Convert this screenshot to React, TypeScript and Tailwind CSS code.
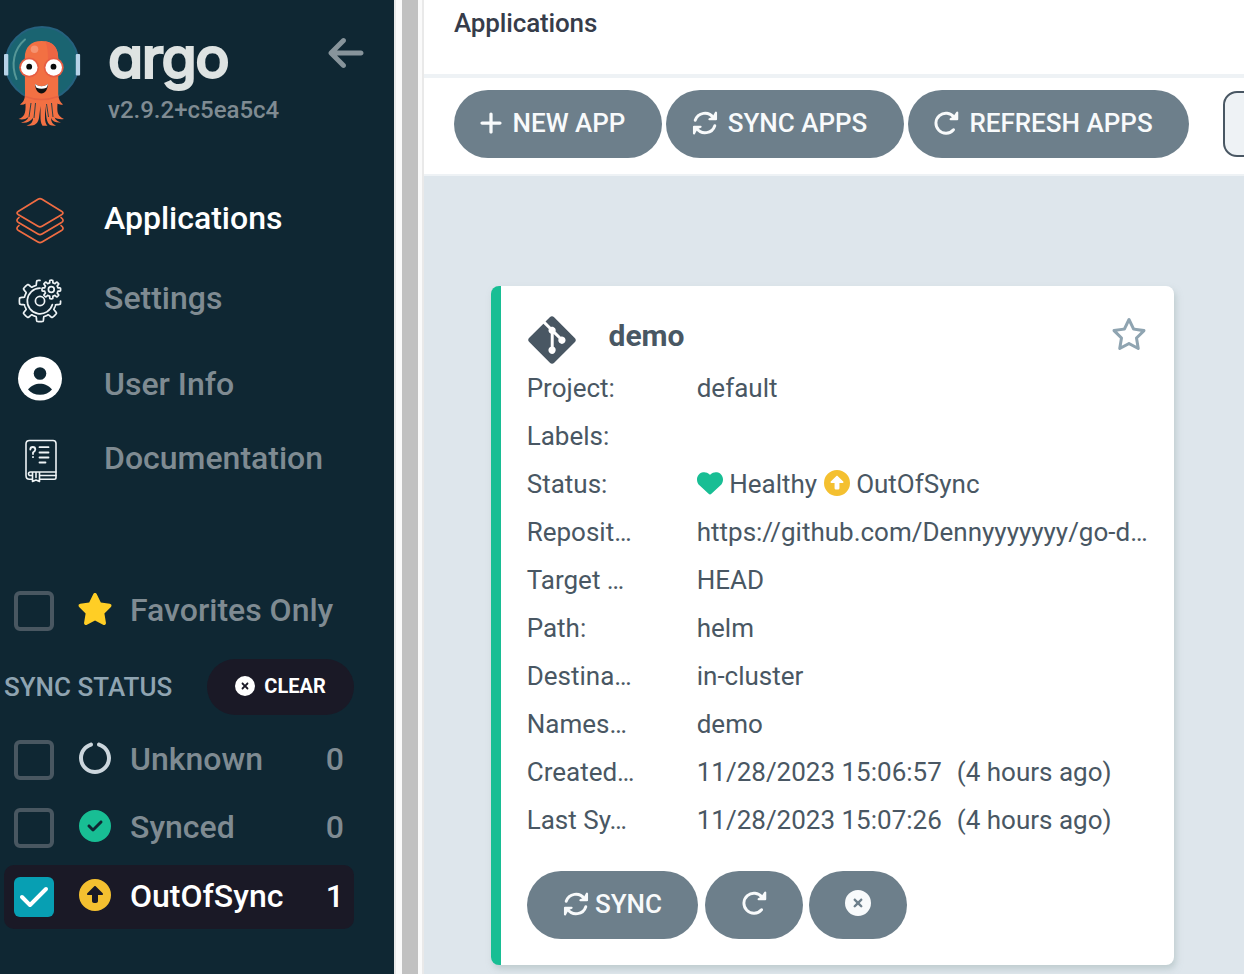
import React from "react";
import {
  FaArrowLeft,
  FaCheck,
  FaCircleCheck,
  FaCircleNotch,
  FaCircleUp,
  FaCircleXmark,
  FaGitAlt,
  FaHeart,
  FaPlus,
  FaRegStar,
  FaStar,
} from "react-icons/fa6";

function gearPath(cx: number, cy: number, outer: number, inner: number, teeth: number, from: number, to: number, close: boolean) {
  const pts: string[] = [];
  const steps = 240;
  for (let i = 0; i <= steps; i++) {
    const a = from + ((to - from) * i) / steps;
    const wave = Math.cos(a * teeth);
    const t = Math.max(-1, Math.min(1, wave * 2.2));
    const r = (outer + inner) / 2 + ((outer - inner) / 2) * Math.sin((t * Math.PI) / 2);
    pts.push(`${(cx + r * Math.cos(a)).toFixed(2)} ${(cy + r * Math.sin(a)).toFixed(2)}`);
  }
  return "M" + pts.join("L") + (close ? "Z" : "");
}

function SyncIcon() {
  return (
    <svg className="mb-0.5 size-[26px] shrink-0" viewBox="0 0 26 26" fill="none" stroke="currentColor" strokeLinecap="round" strokeLinejoin="round">
      <path d="M3.200 10.300A10.200 10.200 0 0 1 21.300 7.600M22.800 15.700A10.200 10.200 0 0 1 4.700 18.400" strokeWidth="2.900" />
      <path d="M24 2.600V9.200H17.400L21.300 7.600ZM2 23.400V16.800H8.600L4.700 18.400Z" fill="currentColor" strokeWidth="2.100" />
    </svg>
  );
}

function RefreshIcon() {
  return (
    <svg className="mb-0.5 size-[26px] shrink-0" viewBox="0 0 26 26" fill="none" stroke="currentColor" strokeLinecap="round" strokeLinejoin="round">
      <path d="M21 7.300A10 10 0 1 0 20.500 19.700" strokeWidth="2.900" />
      <path d="M24.200 2.600V9.200H17.600L21 7.300Z" fill="currentColor" strokeWidth="2.100" />
    </svg>
  );
}

function Mascot() {
  return (
    <svg className="h-[108px] w-[84px] shrink-0" viewBox="0 22 84 108">
      <circle cx="42" cy="63.3" r="36.3" fill="#1a6471" stroke="#25617e" strokeWidth="2" />
      <path d="M25 39.5C14 49 10.500 64 16.500 79" fill="none" stroke="#569797" strokeWidth="2" strokeLinecap="round" />
      <rect x="4" y="54" width="4.300" height="21.500" rx="1" fill="#b7d3e8" />
      <rect x="75.800" y="54" width="4.300" height="21.500" rx="1" fill="#b7d3e8" />
      <path
        d="M24.800 58C24.800 47 31 41 41.500 41S58.200 47 58.200 58V94C58.500 99 60 102 63 104.500C60.500 105 59 104.500 57.500 103.500C57 112 57 115.500 64 119C60 119.500 57 119 54.500 117.500C56 120.500 58 121.500 61 122.500C56 123 52.500 121.500 51 118C51 122 53 124.500 56 125.500C50 126.500 47.500 124 46.500 118L45 106V118C45 121.500 46 124.500 47.500 125.800H42.500C40.500 123 40.500 119 40.500 116V106L39 118C38 124 34 126.500 26.500 125.500C31 124.500 33 122 33 118C30 122 26 123.500 21 122.500C25 121.500 27.500 120 28.500 117C25.500 119.500 22 120 18.500 119C24 117 26 114 25.500 103.500C24 104.700 22 105 20 104.500C23.500 102 25 99 25 94Z"
        fill="#f27043"
      />
      <path d="M45 41.300C54 42.500 58.200 48.500 58.200 58V66H48C48 54 48 46 45 41.300Z" fill="#ed6543" />
      <path d="M25 96.500Q41.500 102.500 58.200 96.500" fill="none" stroke="#e76342" strokeWidth="1.500" />
      <path d="M31 103L29 117M35.500 103L34 118M46.500 104L48.500 117M51.500 103L53 117" stroke="#183b43" strokeWidth=".9" fill="none" />
      <circle cx="34.500" cy="49.300" r="3.800" fill="#f59370" />
      <circle cx="29.200" cy="67.500" r="10" fill="#e75d43" />
      <circle cx="53.700" cy="67.500" r="10" fill="#e75d43" />
      <circle cx="29.200" cy="67.500" r="8.300" fill="#fff" />
      <circle cx="53.700" cy="67.500" r="8.300" fill="#fff" />
      <circle cx="29.200" cy="66.700" r="2.900" fill="#080b0c" />
      <circle cx="53.500" cy="66.700" r="2.900" fill="#080b0c" />
      <path d="M35 84Q41.500 88.500 48 84C47.500 90 45 93.500 41.500 93.500S35.500 90 35 84Z" fill="#111" />
      <path d="M35 84Q41.500 88.500 48 84Q47.500 86.500 46.500 87.700Q41.500 90 36.500 87.700Q35.500 86.500 35 84Z" fill="#fff" />
    </svg>
  );
}

function LayersIcon() {
  return (
    <svg className="h-20 w-20 shrink-0" viewBox="0 180 80 80" fill="none" stroke="#f06c42" strokeWidth="1.7" strokeLinejoin="round" strokeLinecap="round">
      <path d="M38 199.200Q40 198 42 199.200L61.500 211.200Q64.500 213 61.500 214.800L42 226.200Q40 227.400 38 226.200L18.500 214.800Q15.500 213 18.500 211.200Z" />
      <path d="M19 217.500L18.300 218.200Q15.500 220.500 18.500 222.500L38 234Q40 235.200 42 234L61.500 222.500Q64.500 220.500 61.700 218.200L61 217.500" />
      <path d="M19 225.500L18.300 226.200Q15.500 228.500 18.500 230.500L38 242.100Q40 243.300 42 242.100L61.500 230.500Q64.500 228.500 61.700 226.200L61 225.500" />
    </svg>
  );
}

function SettingsIcon() {
  return (
    <svg className="h-20 w-20 shrink-0" viewBox="0 260 80 80" fill="none" stroke="#eef3f5" strokeWidth="1.7" strokeLinecap="round" strokeLinejoin="round">
      <path d={gearPath(40, 301, 20.6, 16, 8, 0, Math.PI * 1.5, false)} />
      <path d="M52.400 304.500A12.800 12.800 0 1 1 40 288.200" />
      <circle cx="40" cy="301" r="4.600" />
      <path d={gearPath(51.3, 289.5, 9.3, 6.8, 8, 0, Math.PI * 2, true)} />
      <circle cx="51.300" cy="289.500" r="2.900" />
    </svg>
  );
}

function UserIcon() {
  return (
    <svg className="h-20 w-20 shrink-0" viewBox="0 340 80 80">
      <circle cx="40" cy="378.600" r="22" fill="#fff" />
      <circle cx="40" cy="373.500" r="6.300" fill="#0f2733" />
      <path d="M28 389.500C31 385.500 35.500 383.700 40 383.700S49 385.500 52 389.500C49 393 45 394.800 40 394.800S31 393 28 389.500Z" fill="#0f2733" />
    </svg>
  );
}

function DocsIcon() {
  return (
    <svg className="h-20 w-20 shrink-0" viewBox="0 420 80 80" fill="none" stroke="#eef3f5" strokeWidth="1.6" strokeLinecap="round" strokeLinejoin="round">
      <path d="M32 479.200H29.500Q26 479.200 26 475.500V444Q26 440.500 29.500 440.500H53Q56 440.500 56 443.500V477.500Q56 479.200 54.300 479.200H39.500" />
      <path d="M56 472H30.500Q28.500 472 28.500 473.800T30.500 475.500H32M39.500 475.500H56M32.500 472.500V481.500L36 480L39.500 481.500V472.500M36 473V477.500" />
      <path d="M30.300 449.500Q30.300 447 32.800 447T35.300 449.500Q35.300 451 33 452.500V454M33 457V457.200M39.500 447.200H48.500M39.500 452.500H48.500M39.500 457.500H48.500M39.500 462.500H45.500" strokeWidth="1.800" />
    </svg>
  );
}

const nav = [
  { label: "Applications", icon: <LayersIcon />, cls: "text-white -mt-1" },
  { label: "Settings", icon: <SettingsIcon />, cls: "text-[#7f8b92] -mt-1" },
  { label: "User Info", icon: <UserIcon />, cls: "text-[#7f8b92] mt-2" },
  { label: "Documentation", icon: <DocsIcon />, cls: "text-[#7f8b92] -mt-1" },
];

function Checkbox({ checked = false }: { checked?: boolean }) {
  return checked ? (
    <span className="flex size-10 shrink-0 items-center justify-center rounded-md bg-[#079fb3] text-white">
      <FaCheck className="size-8" />
    </span>
  ) : (
    <span className="size-10 shrink-0 rounded-md border-4 border-[#495761]" />
  );
}

function FilterRow({ icon, label, count, checked }: { icon: React.ReactNode; label: string; count?: number; checked?: boolean }) {
  return (
    <div className={`flex h-16 w-[350px] items-center rounded-[10px] pr-[10px] pl-[10px] ${checked ? "bg-[#1a1926] text-white" : "text-[#7f8b92]"}`}>
      <Checkbox checked={checked} />
      <span className="mt-[-4px] ml-[25px] flex w-8 justify-center text-[32px]">{icon}</span>
      <span className="mt-[-2px] ml-[19px] flex-1 text-[32px] leading-10">{label}</span>
      {count !== undefined && <span className="mt-[-2px] text-[32px] leading-10">{count}</span>}
    </div>
  );
}

function Sidebar() {
  return (
    <aside className="flex w-[394px] shrink-0 flex-col bg-[#0f2733] font-medium">
      <div className="flex h-[180px] pt-[22px]">
        <Mascot />
        <div className="ml-6 w-[218px]">
          <div className="-mt-px h-[73px] text-[57px] leading-[74px] font-medium tracking-[-1.4px] text-[#dee3e2] [font-family:Inter,sans-serif] [font-feature-settings:'cv11'] [-webkit-text-stroke:2px_#dee3e2] [stroke-linejoin:round]">
            argo
          </div>
          <div className="text-[24px] leading-8 text-[#7f8b92]">v2.9.2+c5ea5c4</div>
        </div>
        <FaArrowLeft className="mt-[11px] size-10 text-[#87949b]" />
      </div>
      <nav>
        {nav.map((n) => (
          <div key={n.label} className="flex h-20 items-center">
            {n.icon}
            <span className={`ml-6 text-[32px] leading-10 ${n.cls}`}>{n.label}</span>
          </div>
        ))}
      </nav>
      <div className="mt-[79px] pl-1">
        <FilterRow icon={<FaStar className="size-9 shrink-0 text-[#ffce25]" />} label="Favorites Only" />
        <div className="mt-4 flex h-14 w-[350px] items-center justify-between">
          <span className="text-[26px] text-[#8fa4b1]">SYNC STATUS</span>
          <span className="flex h-14 w-[147px] items-center justify-center gap-[9px] rounded-full bg-[#1a1926] pb-[3px] text-[20px] font-bold text-white">
            <FaCircleXmark />
            CLEAR
          </span>
        </div>
        <div className="mt-[13px] flex flex-col gap-1">
          <FilterRow icon={<FaCircleNotch className="text-[#ccd6dd]" />} label="Unknown" count={0} />
          <FilterRow icon={<FaCircleCheck className="text-[#18be94]" />} label="Synced" count={0} />
          <div className="pt-px">
            <FilterRow icon={<FaCircleUp className="text-[#f4c030]" />} label="OutOfSync" count={1} checked />
          </div>
        </div>
      </div>
    </aside>
  );
}

function Timestamp({ at, ago }: { at: string; ago: string }) {
  return (
    <span className="flex gap-[15px]">
      <span>{at}</span>
      <span>{ago}</span>
    </span>
  );
}

const details: { label: string; value: React.ReactNode }[] = [
  { label: "Project:", value: "default" },
  { label: "Labels:", value: "" },
  {
    label: "Status:",
    value: (
      <span className="flex items-center">
        <FaHeart className="mr-[6.5px] mb-0.5 text-[#18be94]" />
        Healthy
        <FaCircleUp className="mr-[6.5px] mb-0.5 ml-[6.5px] text-[#f4c030]" />
        OutOfSync
      </span>
    ),
  },
  { label: "Reposit…", value: "https://github.com/Dennyyyyyyy/go-d…" },
  { label: "Target …", value: "HEAD" },
  { label: "Path:", value: "helm" },
  { label: "Destina…", value: "in-cluster" },
  { label: "Names…", value: "demo" },
  { label: "Created…", value: <Timestamp at="11/28/2023 15:06:57" ago="(4 hours ago)" /> },
  { label: "Last Sy…", value: <Timestamp at="11/28/2023 15:07:26" ago="(4 hours ago)" /> },
];

const pill = "flex h-[68px] items-center justify-center rounded-full bg-[#6d7f8b] text-[26px] font-medium text-[#f8fafb]";

function AppCard() {
  return (
    <article className="h-[679px] w-[683px] rounded-lg border-l-[10px] border-[#18be94] bg-white pt-[26px] pr-[26px] pl-[26px] text-[#495763] shadow-[2px_4px_6px_rgba(160,180,180,0.5)]">
      <header className="flex h-[52px] items-center">
        <FaGitAlt className="mt-1 -ml-[2px] size-[54px]" />
        <h2 className="-mt-1 ml-[29.5px] flex-1 text-[30px] leading-9 font-bold">demo</h2>
        <FaRegStar className="-mt-2 mr-px size-[36px] text-[#8fa4b1]" />
      </header>
      <dl className="-ml-[0.3px]">
        {details.map((d) => (
          <div key={d.label} className="flex h-12 items-center text-[26px] whitespace-pre">
            <dt className="w-[170px] shrink-0">{d.label}</dt>
            <dd>{d.value}</dd>
          </div>
        ))}
      </dl>
      <footer className="mt-[27px] flex">
        <button className={`${pill} w-[171px] gap-[6px] pb-px`}>
          <SyncIcon />
          SYNC
        </button>
        <button className={`${pill} ml-[7px] w-[98px] pb-0.5`}>
          <RefreshIcon />
        </button>
        <button className={`${pill} ml-[6px] w-[98px] pb-1`}>
          <FaCircleXmark />
        </button>
      </footer>
    </article>
  );
}

export default function App() {
  return (
    <div className="flex h-[974px] w-[1244px] overflow-hidden [font-family:Roboto,sans-serif]">
      <Sidebar />
      <div className="flex w-[30px] shrink-0 border-x-2 border-[#e9e9e9] bg-[#fafafa] pr-1 pl-1.5">
        <div className="w-4 bg-[#c1c1c1]" />
      </div>
      <main className="flex min-w-0 flex-1 flex-col bg-[#dee6ec]">
        <div className="h-[78px] shrink-0 border-b-4 border-[#eef2f5] bg-white pt-[3px] pl-[30px] text-[26px] leading-10 font-medium tracking-[-0.15px] text-[#363c4a]">
          Applications
        </div>
        <div className="flex h-[98px] shrink-0 items-start gap-1 border-b-2 border-[#eef2f5] bg-white pt-3 pl-[30px]">
          <button className={`${pill} w-[208px] shrink-0 gap-[9px] pr-[13px] pb-px`}>
            <FaPlus className="mb-0.5" />
            NEW APP
          </button>
          <button className={`${pill} w-[238px] shrink-0 gap-[10px] pr-[11px] pb-px`}>
            <SyncIcon />
            SYNC APPS
          </button>
          <button className={`${pill} w-[281px] shrink-0 gap-[10px] pr-[11px] pb-px`}>
            <RefreshIcon />
            REFRESH APPS
          </button>
          <div className="mt-px ml-[30px] h-[66px] w-[200px] shrink-0 rounded-[14px] border-2 border-[#495763] bg-[#eef2f5]" />
        </div>
        <div className="pt-[110px] pl-[67px]">
          <AppCard />
        </div>
      </main>
    </div>
  );
}
